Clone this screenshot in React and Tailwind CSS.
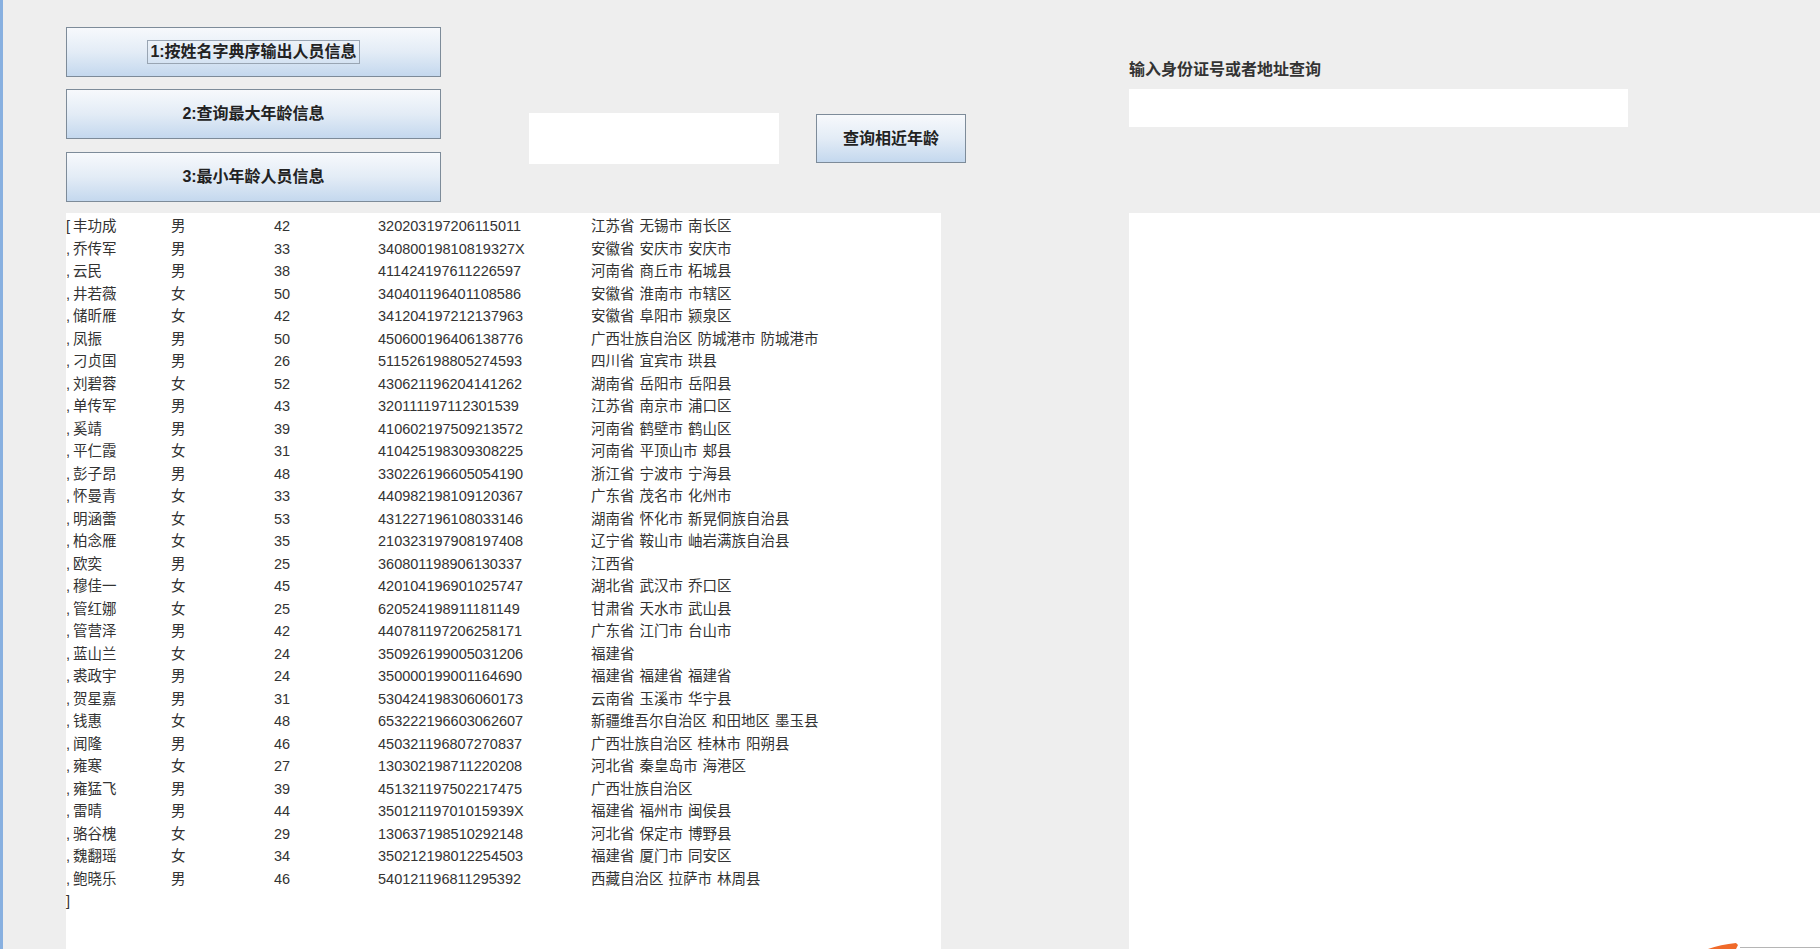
const people = [
  ["丰功成", "男", "42", "320203197206115011", "江苏省 无锡市 南长区"],
  ["乔传军", "男", "33", "34080019810819327X", "安徽省 安庆市 安庆市"],
  ["云民", "男", "38", "411424197611226597", "河南省 商丘市 柘城县"],
  ["井若薇", "女", "50", "340401196401108586", "安徽省 淮南市 市辖区"],
  ["储昕雁", "女", "42", "341204197212137963", "安徽省 阜阳市 颍泉区"],
  ["凤振", "男", "50", "450600196406138776", "广西壮族自治区 防城港市 防城港市"],
  ["刁贞国", "男", "26", "511526198805274593", "四川省 宜宾市 珙县"],
  ["刘碧蓉", "女", "52", "430621196204141262", "湖南省 岳阳市 岳阳县"],
  ["单传军", "男", "43", "320111197112301539", "江苏省 南京市 浦口区"],
  ["奚靖", "男", "39", "410602197509213572", "河南省 鹤壁市 鹤山区"],
  ["平仁霞", "女", "31", "410425198309308225", "河南省 平顶山市 郏县"],
  ["彭子昂", "男", "48", "330226196605054190", "浙江省 宁波市 宁海县"],
  ["怀曼青", "女", "33", "440982198109120367", "广东省 茂名市 化州市"],
  ["明涵蕾", "女", "53", "431227196108033146", "湖南省 怀化市 新晃侗族自治县"],
  ["柏念雁", "女", "35", "210323197908197408", "辽宁省 鞍山市 岫岩满族自治县"],
  ["欧奕", "男", "25", "360801198906130337", "江西省"],
  ["穆佳一", "女", "45", "420104196901025747", "湖北省 武汉市 乔口区"],
  ["管红娜", "女", "25", "620524198911181149", "甘肃省 天水市 武山县"],
  ["管营泽", "男", "42", "440781197206258171", "广东省 江门市 台山市"],
  ["蓝山兰", "女", "24", "350926199005031206", "福建省"],
  ["裘政宇", "男", "24", "350000199001164690", "福建省 福建省 福建省"],
  ["贺星嘉", "男", "31", "530424198306060173", "云南省 玉溪市 华宁县"],
  ["钱惠", "女", "48", "653222196603062607", "新疆维吾尔自治区 和田地区 墨玉县"],
  ["闻隆", "男", "46", "450321196807270837", "广西壮族自治区 桂林市 阳朔县"],
  ["雍寒", "女", "27", "130302198711220208", "河北省 秦皇岛市 海港区"],
  ["雍猛飞", "男", "39", "451321197502217475", "广西壮族自治区"],
  ["雷晴", "男", "44", "35012119701015939X", "福建省 福州市 闽侯县"],
  ["骆谷槐", "女", "29", "130637198510292148", "河北省 保定市 博野县"],
  ["魏翻瑶", "女", "34", "350212198012254503", "福建省 厦门市 同安区"],
  ["鲍晓乐", "男", "46", "540121196811295392", "西藏自治区 拉萨市 林周县"],
];

const font = { fontFamily: '"Liberation Sans", "Noto Sans CJK SC", sans-serif' };

function MetalButton({ children, focused, className }) {
  return (
    <button
      className={
        "flex items-center justify-center border border-[#7d8b99] bg-gradient-to-b from-[#f7f9fc] via-[#e3ecf6] to-[#c4d8ee] text-[16px] font-bold text-[#222] " +
        className
      }
    >
      {focused ? (
        <span className="border border-[#99a5b3] px-[2px] leading-[22px]">{children}</span>
      ) : (
        children
      )}
    </button>
  );
}

export default function App() {
  return (
    <div
      className="relative flex w-[1820px] h-[949px] overflow-hidden bg-[#eeeeee] border-l-[3px] border-[#88b0e0]"
      style={font}
    >
      {/* left side */}
      <div className="ml-[63px] flex w-[900px] flex-col">
        <div className="flex h-[213px] shrink-0">
          <div className="flex w-[375px] flex-col pt-[27px]">
            <MetalButton focused className="h-[50px] w-full">
              1:按姓名字典序输出人员信息
            </MetalButton>
            <MetalButton className="mt-[12px] h-[50px] w-full">2:查询最大年龄信息</MetalButton>
            <MetalButton className="mt-[13px] h-[50px] w-full">3:最小年龄人员信息</MetalButton>
          </div>
          <div className="ml-[88px] mt-[113px] h-[51px] w-[250px] bg-white" />
          <MetalButton className="ml-[37px] mt-[114px] h-[49px] w-[150px]">查询相近年龄</MetalButton>
        </div>

        {/* result text */}
        <div className="w-[875px] flex-1 bg-white pt-[2px] text-[14.5px] leading-[22.5px] text-[#333]">
          {people.map((p, i) => (
            <div key={p[3]} className="flex whitespace-nowrap">
              <span className="w-[7px] shrink-0">{i === 0 ? "[" : ","}</span>
              <span className="w-[98px] shrink-0">{p[0]}</span>
              <span className="w-[103px] shrink-0">{p[1]}</span>
              <span className="w-[104px] shrink-0">{p[2]}</span>
              <span className="w-[213px] shrink-0">{p[3]}</span>
              <span className="flex gap-[5px]">
                {p[4].split(" ").map((w, j) => (
                  <span key={j}>{w}</span>
                ))}
              </span>
            </div>
          ))}
          <div>]</div>
        </div>
      </div>

      {/* right side */}
      <div className="ml-[163px] flex flex-1 flex-col">
        <div className="mt-[59px] h-[22px] text-[16px] font-bold leading-[22px] text-[#333]">
          输入身份证号或者地址查询
        </div>
        <div className="mt-[8px] h-[38px] w-[499px] bg-white" />
        <div className="mt-[86px] flex-1 bg-white" />
      </div>

      {/* stray cursor mark bottom right */}
      <svg className="absolute bottom-0 right-[80px]" width="34" height="7" viewBox="0 0 34 7">
        <path d="M2 7 C10 4 20 2 30 1 L32 3 L30 7 Z" fill="#f06a2a" />
      </svg>
      <div className="absolute bottom-[1px] right-0 h-[1px] w-[80px] bg-[#b5b5b5]" />
    </div>
  );
}
